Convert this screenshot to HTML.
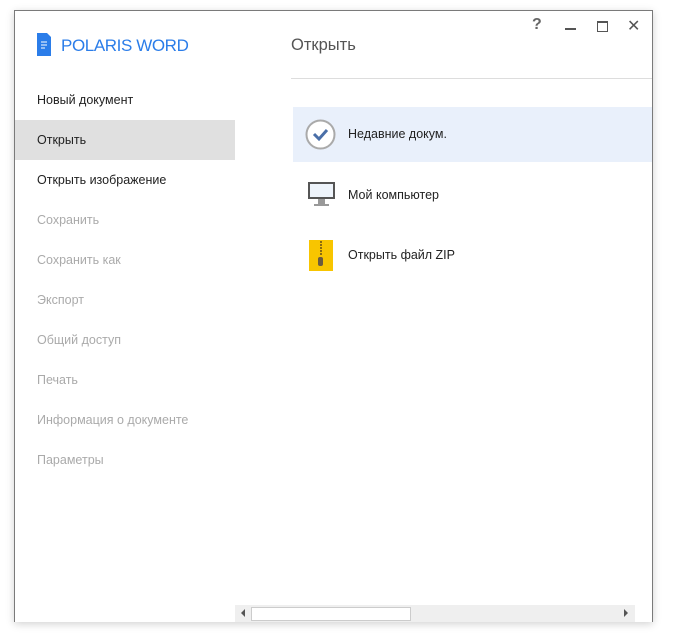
<!DOCTYPE html>
<html><head><meta charset="utf-8"><style>
body{margin:0;width:674px;height:640px;background:#fff;font-family:"Liberation Sans",sans-serif;position:relative;overflow:hidden}
.win{position:absolute;left:14px;top:10px;width:637px;height:611px;border:1px solid #7a7a7a;border-bottom:none;background:#fff;box-shadow:0 2px 8px rgba(0,0,0,.18)}
.a{position:absolute}
.nav{position:absolute;left:0;width:220px;height:40px;line-height:40px;padding-left:22px;box-sizing:border-box;font-size:12.5px;color:#222}
.dis{color:#aaa}
.it{position:absolute;left:278px;width:359px;height:55px;font-size:12.5px;color:#222}
.it span{position:absolute;left:55px;top:20px}
</style></head><body>
<div class="win">
<svg class="a" style="left:22px;top:22px" width="14" height="23"><path d="M0 0H10L14 4V23H0Z" fill="#2b7de9"/><path d="M4 9h6M4 12h6M4 15h4" stroke="#fff" stroke-width="1"/></svg>
<div class="a" style="left:46px;top:25px;font-size:17px;color:#2b7de9;letter-spacing:-.4px">POLARIS <span style="font-weight:300">WORD</span></div>
<div class="nav" style="top:69px">Новый документ</div>
<div class="nav" style="top:109px;background:#e0e0e0">Открыть</div>
<div class="nav" style="top:149px">Открыть изображение</div>
<div class="nav dis" style="top:189px">Сохранить</div>
<div class="nav dis" style="top:229px">Сохранить как</div>
<div class="nav dis" style="top:269px">Экспорт</div>
<div class="nav dis" style="top:309px">Общий доступ</div>
<div class="nav dis" style="top:349px">Печать</div>
<div class="nav dis" style="top:389px">Информация о документе</div>
<div class="nav dis" style="top:429px">Параметры</div>
<div class="a" style="left:276px;top:25px;font-size:16.5px;color:#555">Открыть</div>
<div class="a" style="left:276px;top:67px;width:361px;height:1px;background:#ddd"></div>
<div class="a" style="left:517px;top:5px;font-size:16px;color:#666;font-weight:bold">?</div>
<div class="a" style="left:550px;top:17px;width:11px;height:2px;background:#555"></div>
<div class="a" style="left:582px;top:10px;width:9px;height:8px;border:1px solid #555;border-top-width:2px"></div>
<div class="a" style="left:612px;top:5px;font-size:16px;color:#555">✕</div>
<div class="it" style="top:96px;background:#e9f0fb"><svg class="a" style="left:12px;top:12px" width="31" height="31"><circle cx="15.5" cy="15.5" r="14" fill="#fff" stroke="#aaa" stroke-width="2"/><path d="M9 15l5 5 8-9" stroke="#4a6fa8" stroke-width="3" fill="none"/></svg><span>Недавние докум.</span></div>
<div class="it" style="top:157px"><svg class="a" style="left:15px;top:14px" width="27" height="27"><rect x="0" y="0" width="27" height="17" fill="#555"/><rect x="2" y="2" width="23" height="13" fill="#eef4fb"/><rect x="10" y="17" width="7" height="5" fill="#999"/><rect x="6" y="22" width="15" height="2" fill="#999"/></svg><span>Мой компьютер</span></div>
<div class="it" style="top:217px"><svg class="a" style="left:16px;top:12px" width="24" height="31"><rect width="24" height="31" fill="#f8c500"/><path d="M11 2h2M11 5h2M11 8h2M11 11h2M11 14h2" stroke="#8a6b10" stroke-width="2"/><rect x="9" y="17" width="5" height="9" rx="2" fill="#6a5a40"/></svg><span>Открыть файл ZIP</span></div>
<div class="a" style="left:220px;top:594px;width:400px;height:17px;background:#efefef"></div>
<div class="a" style="left:236px;top:596px;width:158px;height:12px;background:#fff;border:1px solid #ccc"></div>
<div class="a" style="left:226px;top:598px;width:0;height:0;border:4px solid transparent;border-right:4px solid #555;border-left:0"></div>
<div class="a" style="left:609px;top:598px;width:0;height:0;border:4px solid transparent;border-left:4px solid #555;border-right:0"></div>
</div>
</body></html>
